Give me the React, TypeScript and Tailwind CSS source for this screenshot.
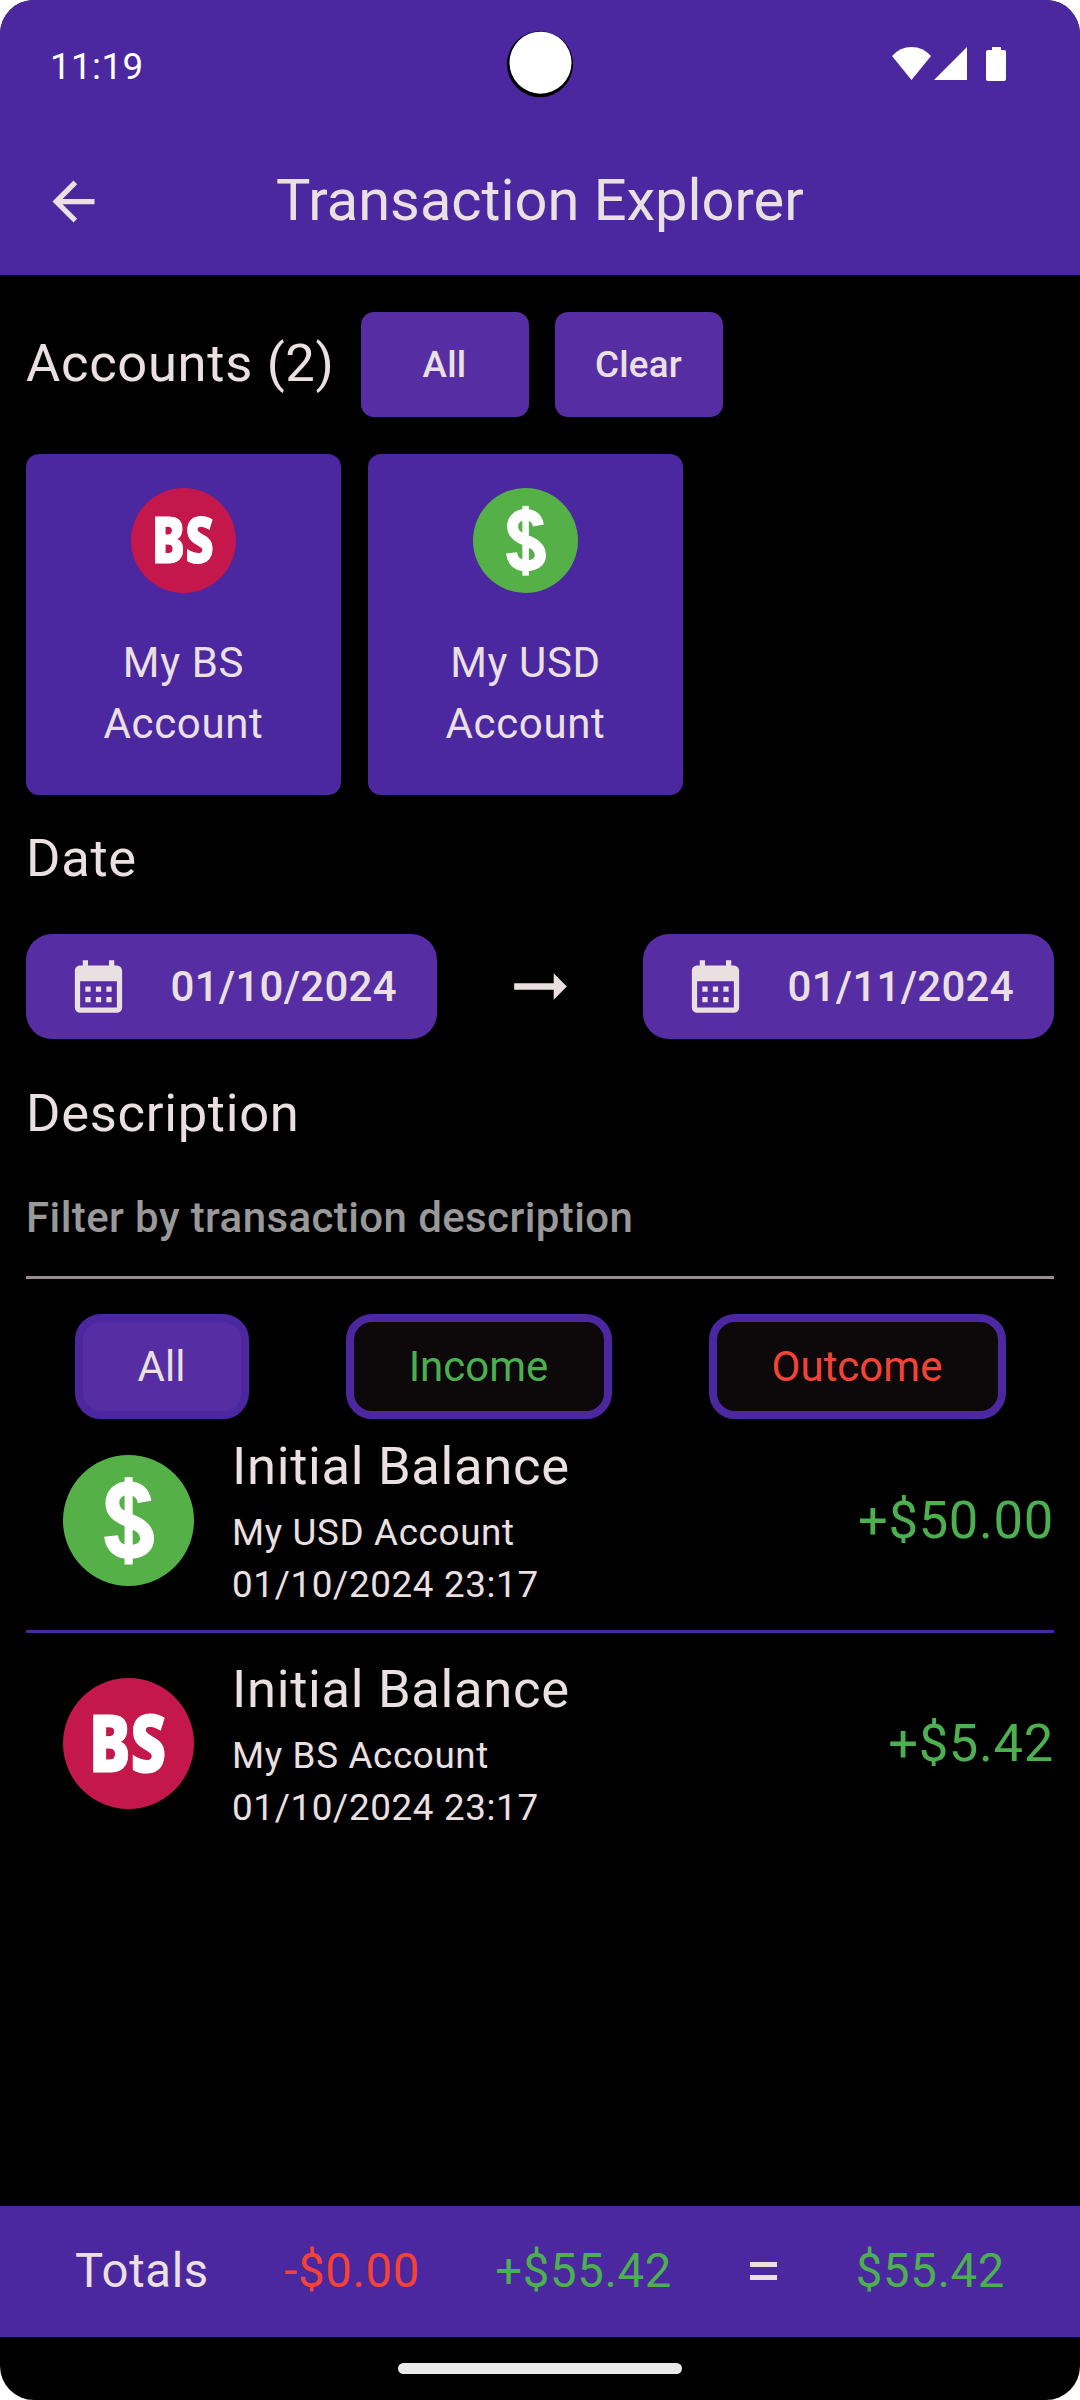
import React from 'react';

function BsCoin({ className }: { className: string }) {
  return (
    <svg viewBox="0 0 100 100" className={className}>
      <circle cx="50" cy="50" r="50" fill="#c4174c" />
      <text x="49.300" y="71.700" textAnchor="middle" textLength="59" lengthAdjust="spacingAndGlyphs" fontFamily="'Open Sans', sans-serif" fontWeight="800" fontSize="60.500" fill="#fff" stroke="#fff" strokeWidth="0.800">BS</text>
    </svg>
  );
}

function UsdCoin({ className }: { className: string }) {
  return (
    <svg viewBox="0 0 100 100" className={className}>
      <circle cx="50" cy="50" r="50" fill="#56b048" />
      <path d="M62.300 35.800C61 28.500 56.500 25.300 50 25.300C42.500 25.300 37.700 30 37.700 36.800C37.700 43.500 42.500 46.800 50 49.800C58.500 53 64.200 56.500 64.200 64C64.200 70.500 58.500 74 50.500 74C42.500 74 37.600 70 36.700 61.800" fill="none" stroke="#fff" strokeWidth="10.600" />
      <path d="M47 17h6.200v66.500h-6.200z" fill="#fff" />
    </svg>
  );
}

function Calendar() {
  return (
    <svg viewBox="0 0 24 24" className="size-[63px]" fill="#ebe0e1">
      <path d="M7 12h2v2H7zm14-6v14a2 2 0 0 1-2 2H5a2 2 0 0 1-2-2V6c0-1.100.9-2 2-2h1V2h2v2h8V2h2v2h1a2 2 0 0 1 2 2M5 8h14zm14 12V10H5v10zm-4-6v-2h2v2zm-4 0v-2h2v2zm-4 2h2v2H7zm8 2v-2h2v2zm-4 0v-2h2v2z" />
    </svg>
  );
}

function DateButton({ date }: { date: string }) {
  return (
    <button className="flex h-[105px] w-[411px] items-center rounded-[26px] bg-[#562da3] pl-[40.5px]">
      <Calendar />
      <span className="ml-[41px] text-[42px] font-medium tracking-[0.26px]">{date}</span>
    </button>
  );
}

function AccountCard({ coin, name }: { coin: React.ReactNode; name: string }) {
  return (
    <div className="flex h-[341px] w-[315px] flex-col items-center rounded-[13px] bg-[#4b27a0] pt-[34px]">
      {coin}
      <p className="mt-[39px] text-center text-[42px] leading-[61px] tracking-[0.660px]">{name}<br />Account</p>
    </div>
  );
}

function Row({ coin, account, amount }: { coin: React.ReactNode; account: string; amount: string }) {
  return (
    <div className="flex h-[174px] items-center pl-[37px]">
      {coin}
      <div className="ml-[38px] flex-1">
        <p className="pb-[3px] text-[52.5px] leading-[74px] tracking-[0.7px]">Initial Balance</p>
        <p className="text-[36.75px] leading-[53px] tracking-[0.660px]">{account}</p>
        <p className="text-[36.75px] leading-[52px] tracking-[0.660px]">01/10/2024 23:17</p>
      </div>
      <span className="text-[52.5px] leading-[76px] tracking-[0.7px] text-[#4caf50]">{amount}</span>
    </div>
  );
}

export default function App() {
  return (
    <div className="h-[2400px] w-[1080px] bg-white">
      <div className="flex h-full w-full flex-col overflow-hidden rounded-[34px] bg-black font-['Roboto',sans-serif] text-[#ebe0e1]">
        <header className="h-[275px] bg-[#4b27a0]">
          <div className="flex h-[128px] items-center justify-between pl-[50px] pr-[73px] text-white">
            <span className="w-[456px] pt-[5px] text-[36.75px] tracking-[0.4px]">11:19</span>
            <svg viewBox="0 0 68 68" className="size-[68px]">
              <circle cx="34" cy="34.200" r="33" fill="#000" />
              <circle cx="34.500" cy="32.700" r="31" fill="#fff" />
            </svg>
            <div className="flex w-[433px] justify-end">
              <svg viewBox="0 0 115 36" className="h-[36px] w-[115px]" fill="#fff">
                <path d="M0 10Q8 1 19.500 1T39 10L19.500 34Z" />
                <path d="M42 34L75 1V34Z" />
                <path d="M100 1h9v3h3q2 0 2 2v27q0 2-2 2H96q-2 0-2-2V6q0-2 2-2h4Z" />
              </svg>
            </div>
          </div>
          <div className="flex h-[147px] items-center pl-[42px]">
            <svg viewBox="0 0 24 24" className="size-[63px]" fill="#ebe0e1"><path d="M20 11H7.830l5.590-5.590L12 4l-8 8 8 8 1.410-1.410L7.830 13H20z" /></svg>
            <h1 className="ml-[171px] pb-[3px] text-[57.75px]">Transaction Explorer</h1>
          </div>
        </header>

        <main className="flex-1 px-[26px] pt-[37px]">
          <div className="flex h-[105px] items-center">
            <h2 className="w-[308.5px] pb-[3px] text-[52.5px] whitespace-nowrap tracking-[0.7px]">Accounts (2)</h2>
            <button className="ml-[26px] h-[105px] w-[168px] rounded-[13px] bg-[#562da3] text-[36.75px] font-medium tracking-[0.260px]">All</button>
            <button className="ml-[26px] h-[105px] w-[168px] rounded-[13px] bg-[#562da3] text-[36.75px] font-medium tracking-[0.260px]">Clear</button>
          </div>
          <div className="mt-[37px] flex gap-[27px]">
            <AccountCard coin={<BsCoin className="size-[105px]" />} name="My BS" />
            <AccountCard coin={<UsdCoin className="size-[105px]" />} name="My USD" />
          </div>
          <h2 className="mt-[25px] text-[52.5px] leading-[76px] tracking-[0.7px]">Date</h2>
          <div className="mt-[38px] flex items-center justify-between">
            <DateButton date="01/10/2024" />
            <svg viewBox="0 0 24 24" className="size-[79px]" fill="#ebe0e1"><path d="M16.010 11H4v2h12.010v3L20 12l-3.990-4z" /></svg>
            <DateButton date="01/11/2024" />
          </div>
          <h2 className="mt-[36px] text-[52.5px] leading-[76px] tracking-[0.7px]">Description</h2>
          <div className="mt-[2px] flex h-[126px] items-center border-b-[3px] border-[#988e90] pt-[6px]">
            <span className="text-[42px] font-medium tracking-[0.4px] text-[#999]">Filter by transaction description</span>
          </div>
          <div className="mt-[35px] flex justify-around text-[42px]">
            <button className="h-[105px] w-[174px] rounded-[26px] border-8 border-[#4b27a0] bg-[#562da3]">All</button>
            <button className="h-[105px] w-[266px] rounded-[26px] border-8 border-[#4b27a0] bg-[#0d090a] text-[#4caf50]">Income</button>
            <button className="h-[105px] w-[297px] rounded-[26px] border-8 border-[#4b27a0] bg-[#0d090a] text-[#f44336]">Outcome</button>
          </div>
          <div className="mt-[14px]">
            <Row coin={<UsdCoin className="size-[131px]" />} account="My USD Account" amount="+$50.00" />
          </div>
          <div className="mt-[23px] border-t-[3px] border-[#4b27a0] pt-[23px]">
            <Row coin={<BsCoin className="size-[131px]" />} account="My BS Account" amount="+$5.42" />
          </div>
        </main>

        <footer className="flex h-[131px] items-center justify-between bg-[#4b27a0] px-[75px] text-[47.25px] tracking-[0.660px]">
          <span>Totals</span>
          <span className="text-[#f44336]">-$0.00</span>
          <span className="text-[#4caf50]">+$55.42</span>
          <svg viewBox="0 0 27 18" className="mx-[3px] mb-[2px] h-[18px] w-[27px]" fill="#ebe0e1"><path d="M0 0h27v5H0zM0 13h27v5H0z" /></svg>
          <span className="text-[#4caf50]">$55.42</span>
        </footer>
        <div className="flex h-[63px] items-center justify-center">
          <div className="h-[11px] w-[284px] rounded-full bg-[#ebebeb]" />
        </div>
      </div>
    </div>
  );
}
